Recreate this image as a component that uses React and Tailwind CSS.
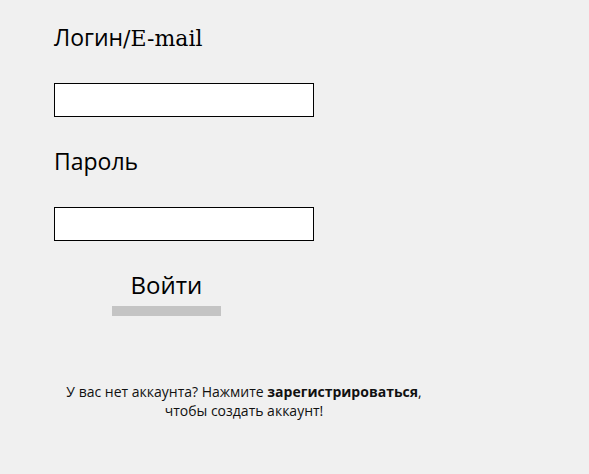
export default function App() {
  return (
    <div className="min-h-screen bg-[#f0f0f0] pl-[54px] pt-[22px] text-black" style={{ fontFamily: '"Open Sans", sans-serif' }}>
      <form className="flex flex-col items-start" onSubmit={(e) => e.preventDefault()}>
        <label className="h-[31px] text-[23px] leading-[31px]">
          Логин<span className="text-[22px]" style={{ fontFamily: '"DejaVu Serif", serif' }}>/E-mail</span>
        </label>
        <input type="text" className="mt-[30px] h-[34px] w-[260px] border border-black bg-white px-2 outline-none" />

        <label className="mt-[29px] h-[31px] text-[23px] leading-[31px]">Пароль</label>
        <input type="password" className="mt-[30px] h-[34px] w-[260px] border border-black bg-white px-2 outline-none" />

        <button type="submit" className="ml-[58px] mt-[28px] flex w-[109px] flex-col items-center">
          <span className="text-[24px] leading-[32px]">Войти</span>
          <span className="mt-[5px] h-[10px] w-full bg-[#c4c4c4]" />
        </button>
      </form>

      <p className="mt-[66px] w-[380px] text-center text-[14px] leading-[19px] text-[#111]">
        У вас нет аккаунта? Нажмите <b className="font-bold">зарегистрироваться</b>, чтобы создать аккаунт!
      </p>
    </div>
  );
}
